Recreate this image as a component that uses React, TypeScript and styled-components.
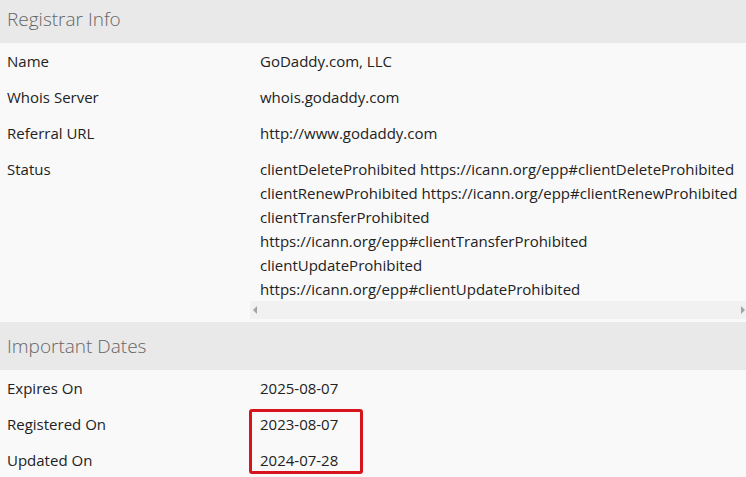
import React from "react";
import styled, { createGlobalStyle } from "styled-components";

const Global = createGlobalStyle`
  html, body { margin: 0; padding: 0; background: #f9f9f9; overflow: hidden; }
  body { font-family: "Open Sans", "Noto Sans", sans-serif; color: #222; }
`;

const Wrap = styled.div`
  position: relative;
  display: flow-root;
`;

const Page = styled.div`
  margin-top: -5px;
  width: 746px;
`;

const Section = styled.section`
  display: flex;
  flex-direction: column;
`;

const Header = styled.div`
  height: 48px;
  display: flex;
  align-items: center;
  padding-left: 7px;
  background: #e9e9e9;
  color: #666;
  font-size: 19px;
  font-weight: 300;
`;

const Row = styled.div`
  display: grid;
  grid-template-columns: 250px 1fr;
  background: #f9f9f9;
  font-size: 15px;
  line-height: 24px;
`;

const Label = styled.div`
  padding: 6px 0 6px 7px;
`;

const Value = styled.div<{ $scroll?: boolean }>`
  padding: ${(p) => (p.$scroll ? "6px 0 3px 0" : "6px 0 6px 10px")};
  min-width: 0;
`;

const Lines = styled.div`
  padding-left: 10px;
  white-space: nowrap;
`;

const Line = styled.div``;

const Track = styled.div`
  height: 18px;
  background: #f1f1f1;
  display: flex;
  align-items: center;
  justify-content: space-between;
  padding: 0 1px 0 3px;
`;

const Arrow = styled.span<{ $dir: "left" | "right" }>`
  width: 0;
  height: 0;
  border-top: 4px solid transparent;
  border-bottom: 4px solid transparent;
  ${(p) =>
    p.$dir === "left"
      ? "border-right: 4px solid #a3a3a3;"
      : "border-left: 4px solid #a3a3a3;"}
`;

const Highlight = styled.div`
  position: absolute;
  left: 249px;
  top: 409px;
  width: 114px;
  height: 65px;
  border: 3px solid #d7141c;
  border-radius: 3px;
  box-sizing: border-box;
  pointer-events: none;
`;

const statusLines = [
  "clientDeleteProhibited https://icann.org/epp#clientDeleteProhibited",
  "clientRenewProhibited https://icann.org/epp#clientRenewProhibited",
  "clientTransferProhibited",
  "https://icann.org/epp#clientTransferProhibited",
  "clientUpdateProhibited",
  "https://icann.org/epp#clientUpdateProhibited",
];

export default function App() {
  return (
    <Wrap>
      <Global />
      <Page>
        <Section>
          <Header>Registrar Info</Header>
          <Row>
            <Label>Name</Label>
            <Value>GoDaddy.com, LLC</Value>
          </Row>
          <Row>
            <Label>Whois Server</Label>
            <Value>whois.godaddy.com</Value>
          </Row>
          <Row>
            <Label>Referral URL</Label>
            <Value>http://www.godaddy.com</Value>
          </Row>
          <Row>
            <Label>Status</Label>
            <Value $scroll>
              <Lines>
                {statusLines.map((l, i) => (
                  <Line key={i}>{l}</Line>
                ))}
              </Lines>
              <Track>
                <Arrow $dir="left" />
                <Arrow $dir="right" />
              </Track>
            </Value>
          </Row>
        </Section>
        <Section>
          <Header>Important Dates</Header>
          <Row>
            <Label>Expires On</Label>
            <Value>2025-08-07</Value>
          </Row>
          <Row>
            <Label>Registered On</Label>
            <Value>2023-08-07</Value>
          </Row>
          <Row>
            <Label>Updated On</Label>
            <Value>2024-07-28</Value>
          </Row>
        </Section>
      </Page>
      <Highlight />
    </Wrap>
  );
}
